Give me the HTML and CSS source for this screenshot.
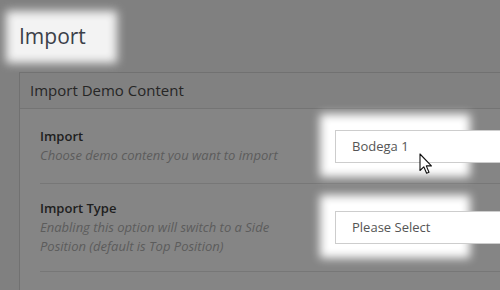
FILE: index.html
```html
<!DOCTYPE html>
<html lang="en">
<head>
  <meta charset="UTF-8" />
  <title>Import</title>
  <link rel="stylesheet" href="styles.css">
</head>
<body>
  <div class="wrap">
    <h1 class="page-title spot spot-title">Import</h1>

    <div class="panel">
      <div class="panel-head">Import Demo Content</div>
      <div class="panel-body">
        <div class="row row-first">
          <div class="info">
            <div class="label">Import</div>
            <div class="desc">Choose demo content you want to import</div>
          </div>
          <div class="field spot spot-field">
            <div class="select">Bodega 1</div>
            <svg class="cursor" width="14" height="22" viewBox="0 0 14 22">
              <path d="M1 1 L1 17.5 L4.8 13.8 L7.6 20.2 L10 19.2 L7.3 12.9 L12.4 12.9 Z" fill="#fff" stroke="#111" stroke-width="1.1" stroke-linejoin="round" />
            </svg>
          </div>
        </div>

        <div class="row">
          <div class="info">
            <div class="label">Import Type</div>
            <div class="desc">Enabling this option will switch to a Side Position (default is Top Position)</div>
          </div>
          <div class="field spot spot-field">
            <div class="select">Please Select</div>
          </div>
        </div>

        <div class="row row-last"></div>
      </div>
    </div>
  </div>
</body>
</html>
```

FILE: styles.css
```css
body {
  margin: 0;
  background: #808080;
  font-family: "Open Sans", "DejaVu Sans", sans-serif;
  overflow: hidden;
  height: 290px;
}

.wrap {
  padding: 20px 0 0 19px;
}

/* lit areas of the walkthrough overlay */
.spot {
  position: relative;
  z-index: 1;
}

.spot::before {
  content: "";
  position: absolute;
  z-index: -1;
  filter: blur(5px);
}

.spot-title::before {
  left: -13px;
  top: -9px;
  width: 111px;
  height: 52px;
  background: #f3f3f3;
}

.spot-field::before {
  left: -15px;
  top: -16px;
  width: 150px;
  height: 63px;
  background: #fff;
}

.page-title {
  display: inline-block;
  margin: 0 0 19px;
  font-size: 21px;
  line-height: 33px;
  font-weight: 400;
  color: #3b4049;
}

.panel {
  width: 600px;
  background: #858585;
  border: 1px solid #717171;
  border-right: none;
  height: 300px;
}

.panel-head {
  height: 35px;
  line-height: 35px;
  padding-left: 10px;
  font-size: 15px;
  color: #262626;
  background: #818181;
  border-bottom: 1px solid #747474;
}

.panel-body {
  padding-left: 20px;
}

.row {
  display: flex;
  align-items: center;
  padding: 15px 0;
  min-height: 44px;
  border-bottom: 1px solid #777;
}

.info {
  width: 255px;
  flex-shrink: 0;
  font-size: 13px;
  line-height: 19px;
}

.label {
  font-weight: 600;
  color: #1e1e1e;
}

.desc {
  font-style: italic;
  color: #5c5c5c;
}

.field {
  margin-left: 40px;
}

.select {
  width: 240px;
  height: 31px;
  line-height: 31px;
  padding-left: 16px;
  border: 1px solid #cdcdcd;
  background: #fff;
  font-size: 13px;
  color: #555;
}

.cursor {
  position: absolute;
  left: 84px;
  top: 23px;
}
```
